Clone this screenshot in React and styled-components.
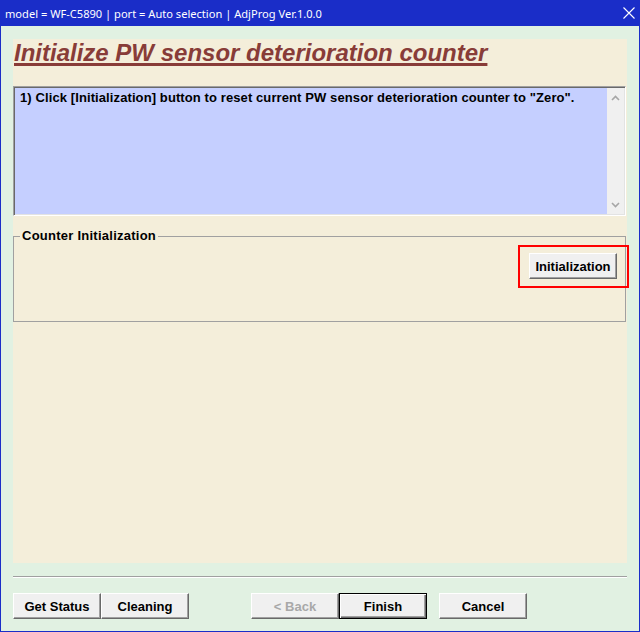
import React from "react";
import styled, { createGlobalStyle, css } from "styled-components";

const GlobalStyle = createGlobalStyle`
  html, body {
    margin: 0;
    padding: 0;
    background: #ffffff;
  }
  body {
    font-family: "Liberation Sans", Arial, sans-serif;
  }
`;

const App = () => {
  return (
    <>
      <GlobalStyle />
      <Window>
        <TitleBar>
          <span>model = WF-C5890 | port = Auto selection | AdjProg Ver.1.0.0</span>
          <CloseIcon width="12" height="12" viewBox="0 0 12 12">
            <path d="M0.5 0.5 L11.5 11.5 M11.5 0.5 L0.5 11.5" stroke="#fff" strokeWidth="1.1" fill="none" />
          </CloseIcon>
        </TitleBar>
        <Body>
          <Panel>
            <Heading>Initialize PW sensor deterioration counter</Heading>
            <TextBox>
              <Message>
                1) Click [Initialization] button to reset current PW sensor deterioration counter to "Zero".
              </Message>
              <ScrollTrack>
                <svg width="9" height="6" viewBox="0 0 9 6">
                  <path d="M1 5 L4.5 1.5 L8 5" stroke="#a6a6a6" strokeWidth="1.6" fill="none" />
                </svg>
                <svg width="9" height="6" viewBox="0 0 9 6">
                  <path d="M1 1 L4.5 4.5 L8 1" stroke="#a6a6a6" strokeWidth="1.6" fill="none" />
                </svg>
              </ScrollTrack>
            </TextBox>
            <GroupBox>
              <Legend>Counter Initialization</Legend>
              <Highlighted>
                <Button>Initialization</Button>
                <RedMark />
              </Highlighted>
            </GroupBox>
          </Panel>
          <Separator />
          <ButtonRow>
            <Cluster>
              <Button>Get Status</Button>
              <Button>Cleaning</Button>
            </Cluster>
            <Cluster $offset={62}>
              <Button disabled>&lt; Back</Button>
              <Button $default>Finish</Button>
            </Cluster>
            <Cluster $offset={12}>
              <Button>Cancel</Button>
            </Cluster>
          </ButtonRow>
        </Body>
      </Window>
    </>
  );
};

export default App;

const Window = styled.div`
  width: 640px;
  height: 632px;
  box-sizing: border-box;
  border: 1px solid #1a2dc8;
  border-top: none;
  display: flex;
  flex-direction: column;
  background: #e1f1e2;
`;

const TitleBar = styled.div`
  height: 26px;
  flex: none;
  background: #1a2dc8;
  color: #ffffff;
  display: flex;
  align-items: center;
  justify-content: space-between;
  padding: 0 4px 0 4px;
  font-family: "Noto Sans", "Open Sans", sans-serif;
  font-size: 11.1px;
`;

const CloseIcon = styled.svg`
  display: block;
`;

const Body = styled.div`
  flex: 1;
  display: flex;
  flex-direction: column;
  padding: 13px 12px 12px;
`;

const Panel = styled.div`
  flex: 1;
  background: #f4eeda;
  display: flex;
  flex-direction: column;
`;

const Heading = styled.h1`
  margin: 0;
  padding-left: 1px;
  font: italic bold 24px/28px "Liberation Sans", Arial, sans-serif;
  color: #883c38;
  text-decoration: underline;
  text-decoration-thickness: 3px;
`;

const TextBox = styled.div`
  margin: 19px 1px 0 0;
  height: 130px;
  box-sizing: border-box;
  display: flex;
  background: #c5cfff;
  border: 1px solid;
  border-color: #a0a0a0 #ffffff #ffffff #a0a0a0;
  box-shadow: inset 1px 1px 0 #696969, inset -1px -1px 0 #e3e3e3;
`;

const Message = styled.div`
  flex: 1;
  padding: 3px 6px;
  font: bold 13px/15px "Liberation Sans", Arial, sans-serif;
  letter-spacing: 0.1px;
  color: #000000;
`;

const ScrollTrack = styled.div`
  width: 17px;
  flex: none;
  margin: 1px 1px 1px 0;
  background: #f0f0f0;
  display: flex;
  flex-direction: column;
  justify-content: space-between;
  align-items: center;
  padding: 7px 0 6px;
  box-sizing: border-box;
`;

const GroupBox = styled.fieldset`
  margin: 12px 1px 0 0;
  padding: 9px 8px 42px 6px;
  border: 1px solid #a0a0a0;
  display: flex;
  justify-content: flex-end;
  min-width: 0;
`;

const Legend = styled.legend`
  padding: 0 2px;
  font: bold 13px/16px "Liberation Sans", Arial, sans-serif;
  letter-spacing: 0.25px;
  color: #000000;
`;

const Highlighted = styled.div`
  position: relative;
`;

const RedMark = styled.span`
  position: absolute;
  inset: -8px -12px -9px -11px;
  border: 2px solid #ff0000;
  pointer-events: none;
`;

const Button = styled.button`
  width: 88px;
  height: 26px;
  box-sizing: border-box;
  padding: 0;
  background: #f0f0f0;
  font: bold 13px "Liberation Sans", Arial, sans-serif;
  color: #000000;
  border: 1px solid;
  border-color: #ffffff #696969 #696969 #ffffff;
  box-shadow: inset -1px -1px 0 #a0a0a0;

  ${(p) =>
    p.$default &&
    css`
      border-color: #000000;
      box-shadow: inset 1px 1px 0 #ffffff, inset -1px -1px 0 #696969, inset -2px -2px 0 #a0a0a0;
    `}

  &:disabled {
    color: #a8a8a8;
  }
`;

const Separator = styled.div`
  margin-top: 13px;
  border-top: 1px solid #a0a0a0;
  border-bottom: 1px solid #ffffff;
`;

const ButtonRow = styled.div`
  margin-top: 15px;
  display: flex;
`;

const Cluster = styled.div`
  display: flex;
  margin-left: ${(p) => p.$offset || 0}px;
`;
